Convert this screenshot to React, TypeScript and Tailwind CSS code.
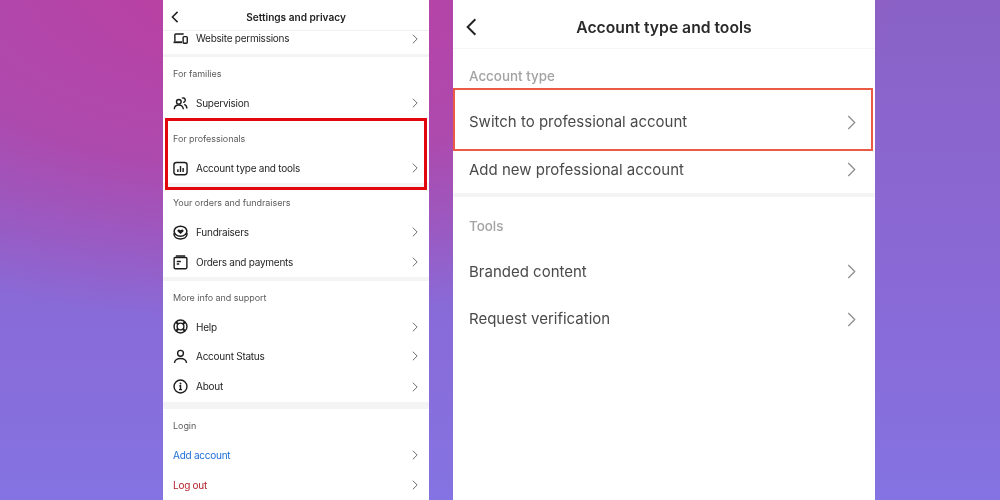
const Chevron = ({ className, back }: { className: string; back?: boolean }) => (
  <svg viewBox="0 0 8 14" fill="none" stroke="currentColor" strokeWidth="1.2" className={className}>
    <path d={back ? "M7 1 1 7l6 6" : "M1 1l6 6-6 6"} />
  </svg>
);

const Glyph = ({ children }: { children: React.ReactNode }) => (
  <svg viewBox="0 0 16 16" fill="none" stroke="#1c1c1c" strokeWidth="1.5" className="h-[15px] w-[15px] shrink-0">
    {children}
  </svg>
);

const icons: Record<string, React.ReactNode> = {
  web: (
    <Glyph>
      <path d="M2 11V4.2a1 1 0 0 1 1-1h8.4" />
      <path d="M.6 12h9" strokeWidth="2" />
      <rect x="10.8" y="6" width="4.4" height="7" rx=".9" />
    </Glyph>
  ),
  people: (
    <Glyph>
      <circle cx="6.2" cy="6.2" r="2.5" />
      <path d="M1.4 14.2c0-6.2 9.6-6.2 9.6 0" />
      <path d="M9.4 2.4a2.4 2.4 0 1 1 1.4 4.4M12 9c1.6.5 2.8 2 2.8 4.4" />
    </Glyph>
  ),
  chart: (
    <Glyph>
      <rect x="1" y="1.6" width="14" height="13" rx="2.6" />
      <path d="M5.2 8.8v2.8M8 5.2v6.4M10.8 7.4v4.2" strokeWidth="1.5" />
    </Glyph>
  ),
  fund: (
    <Glyph>
      <ellipse cx="8" cy="6.6" rx="6.8" ry="5.4" strokeWidth="1.6" />
      <path d="M1.2 8.4v2.4C2 13.2 5 14.8 8 14.8s6-1.6 6.8-4V8.4" strokeWidth="1.6" />
      <path
        d="M8 9.6 5 6.9c-1.1-1.4 1-3.1 3-1.3 2-1.8 4.1-.1 3 1.3z"
        fill="#1c1c1c"
        stroke="none"
      />
    </Glyph>
  ),
  orders: (
    <Glyph>
      <rect x="1.2" y="2.6" width="13.6" height="12" rx="1.2" />
      <path d="M3 1.1h10M4 7h4.4M4 9.6h2.6" />
    </Glyph>
  ),
  help: (
    <Glyph>
      <circle cx="8" cy="8" r="6.9" />
      <circle cx="8" cy="8" r="3.6" />
      <path d="m3.2 3.2 2.4 2.4M12.8 3.2l-2.4 2.4M3.2 12.8l2.4-2.4M12.8 12.8l-2.4-2.4" strokeWidth="2.2" />
    </Glyph>
  ),
  user: (
    <Glyph>
      <circle cx="8" cy="4.6" r="3.1" />
      <path d="M1.6 15c0-6.4 12.8-6.4 12.8 0" />
    </Glyph>
  ),
  info: (
    <Glyph>
      <circle cx="8" cy="8" r="6.9" />
      <path d="M6.8 7.2H8v4M6.4 11.3h3.2" />
      <circle cx="8" cy="4.8" r="1" fill="#1c1c1c" stroke="none" />
    </Glyph>
  ),
};

const Row = ({
  label,
  icon,
  height = "h-[30px]",
  color = "text-[#262626]",
  textPad = "pt-px",
}: {
  label: string;
  icon?: string;
  height?: string;
  color?: string;
  textPad?: string;
}) => (
  <div className={`flex items-center pl-[10px] pr-[11px] ${height}`}>
    {icon && <span className="mr-[9px] flex w-[14px] justify-start">{icons[icon]}</span>}
    <span className={`flex-1 text-[10px] tracking-[-0.25px] ${textPad} ${color}`}>{label}</span>
    <Chevron className="h-[10px] w-[6px] text-[#555]" />
  </div>
);

const Label = ({ text, height }: { text: string; height: string }) => (
  <div className={`flex items-center pl-[10px] text-[9px] tracking-[-0.05px] text-[#5c5c5c] ${height}`}>{text}</div>
);

const Band = ({ height }: { height: string }) => <div className={`bg-[#f4f4f4] ${height}`} />;

const BigRow = ({ label, height }: { label: string; height: string }) => (
  <div className={`flex items-center pl-[16px] pr-[19px] ${height}`}>
    <span className="flex-1 pt-px text-[15px] text-[#4a4a4a]">{label}</span>
    <Chevron className="h-[15px] w-[9px] text-[#8e8e8e]" />
  </div>
);

const BigLabel = ({ text, height }: { text: string; height: string }) => (
  <div className={`flex items-center pl-[16px] text-[13.4px] font-medium text-[#a3a3a3] ${height}`}>{text}</div>
);

export default function App() {
  return (
    <div className="flex h-[500px] w-[1000px] gap-[24px] overflow-hidden bg-[radial-gradient(ellipse_650px_340px_at_250px_-20px,#bd3ea0_0%,#ad4aae_55%,#ad4aae00_100%),linear-gradient(180deg,#8a62c6_0%,#8a68d4_50%,#8473e2_100%)] pl-[163px] font-['Inter',sans-serif] blur-[0.35px]">
      <div className="relative h-full w-[266px] bg-white">
        <div className="relative flex h-[31px] items-center justify-center border-b border-[#f0f0f0] pt-[5px]">
          <Chevron back className="absolute left-[8px] top-[11px] h-[12px] w-[8px] text-[#222] [&>path]:stroke-[1.8]" />
          <span className="text-[10.1px] font-semibold text-[#222]">Settings and privacy</span>
        </div>
        <Row label="Website permissions" icon="web" height="h-[15px] mb-[8px]" textPad="pt-0" />
        <Band height="h-[3px]" />
        <Label text="For families" height="h-[31px] pt-[3px]" />
        <Row label="Supervision" icon="people" />
        <Label text="For professionals" height="h-[35px] pt-[7px]" />
        <Row label="Account type and tools" icon="chart" />
        <Band height="h-[4px]" />
        <Label text="Your orders and fundraisers" height="h-[30px] pt-[2px]" />
        <Row label="Fundraisers" icon="fund" />
        <Row label="Orders and payments" icon="orders" />
        <Band height="h-[4px]" />
        <Label text="More info and support" height="h-[31px] pt-[3px]" />
        <Row label="Help" icon="help" height="h-[29px]" />
        <Row label="Account Status" icon="user" />
        <Row label="About" icon="info" height="h-[31px]" textPad="pt-0" />
        <Band height="h-[7px]" />
        <Label text="Login" height="h-[31px] pt-[3px]" />
        <Row label="Add account" color="text-[#1d6fd8]" />
        <Row label="Log out" color="text-[#b3202c]" />
        <div className="absolute left-[2px] top-[118px] h-[72px] w-[262px] border-[3px] border-[#e2060f]" />
      </div>

      <div className="relative h-full w-[422px] bg-white">
        <div className="relative flex h-[49px] items-center justify-center border-b border-[#f5f5f5] pt-[8px]">
          <Chevron back className="absolute left-[13px] top-[18px] h-[18px] w-[11px] text-[#222] [&>path]:stroke-[1.5]" />
          <span className="text-[15.7px] font-semibold text-[#2a2a2a]">Account type and tools</span>
        </div>
        <BigLabel text="Account type" height="h-[49px] pt-[5px]" />
        <BigRow label="Switch to professional account" height="h-[48px]" />
        <BigRow label="Add new professional account" height="h-[47px]" />
        <Band height="h-[4px]" />
        <BigLabel text="Tools" height="h-[51px] pt-[7px]" />
        <BigRow label="Branded content" height="h-[47px]" />
        <BigRow label="Request verification" height="h-[48px]" />
        <div className="absolute left-0 top-[88px] h-[63px] w-[420px] border-2 border-[#ea5a45]" />
      </div>
    </div>
  );
}
